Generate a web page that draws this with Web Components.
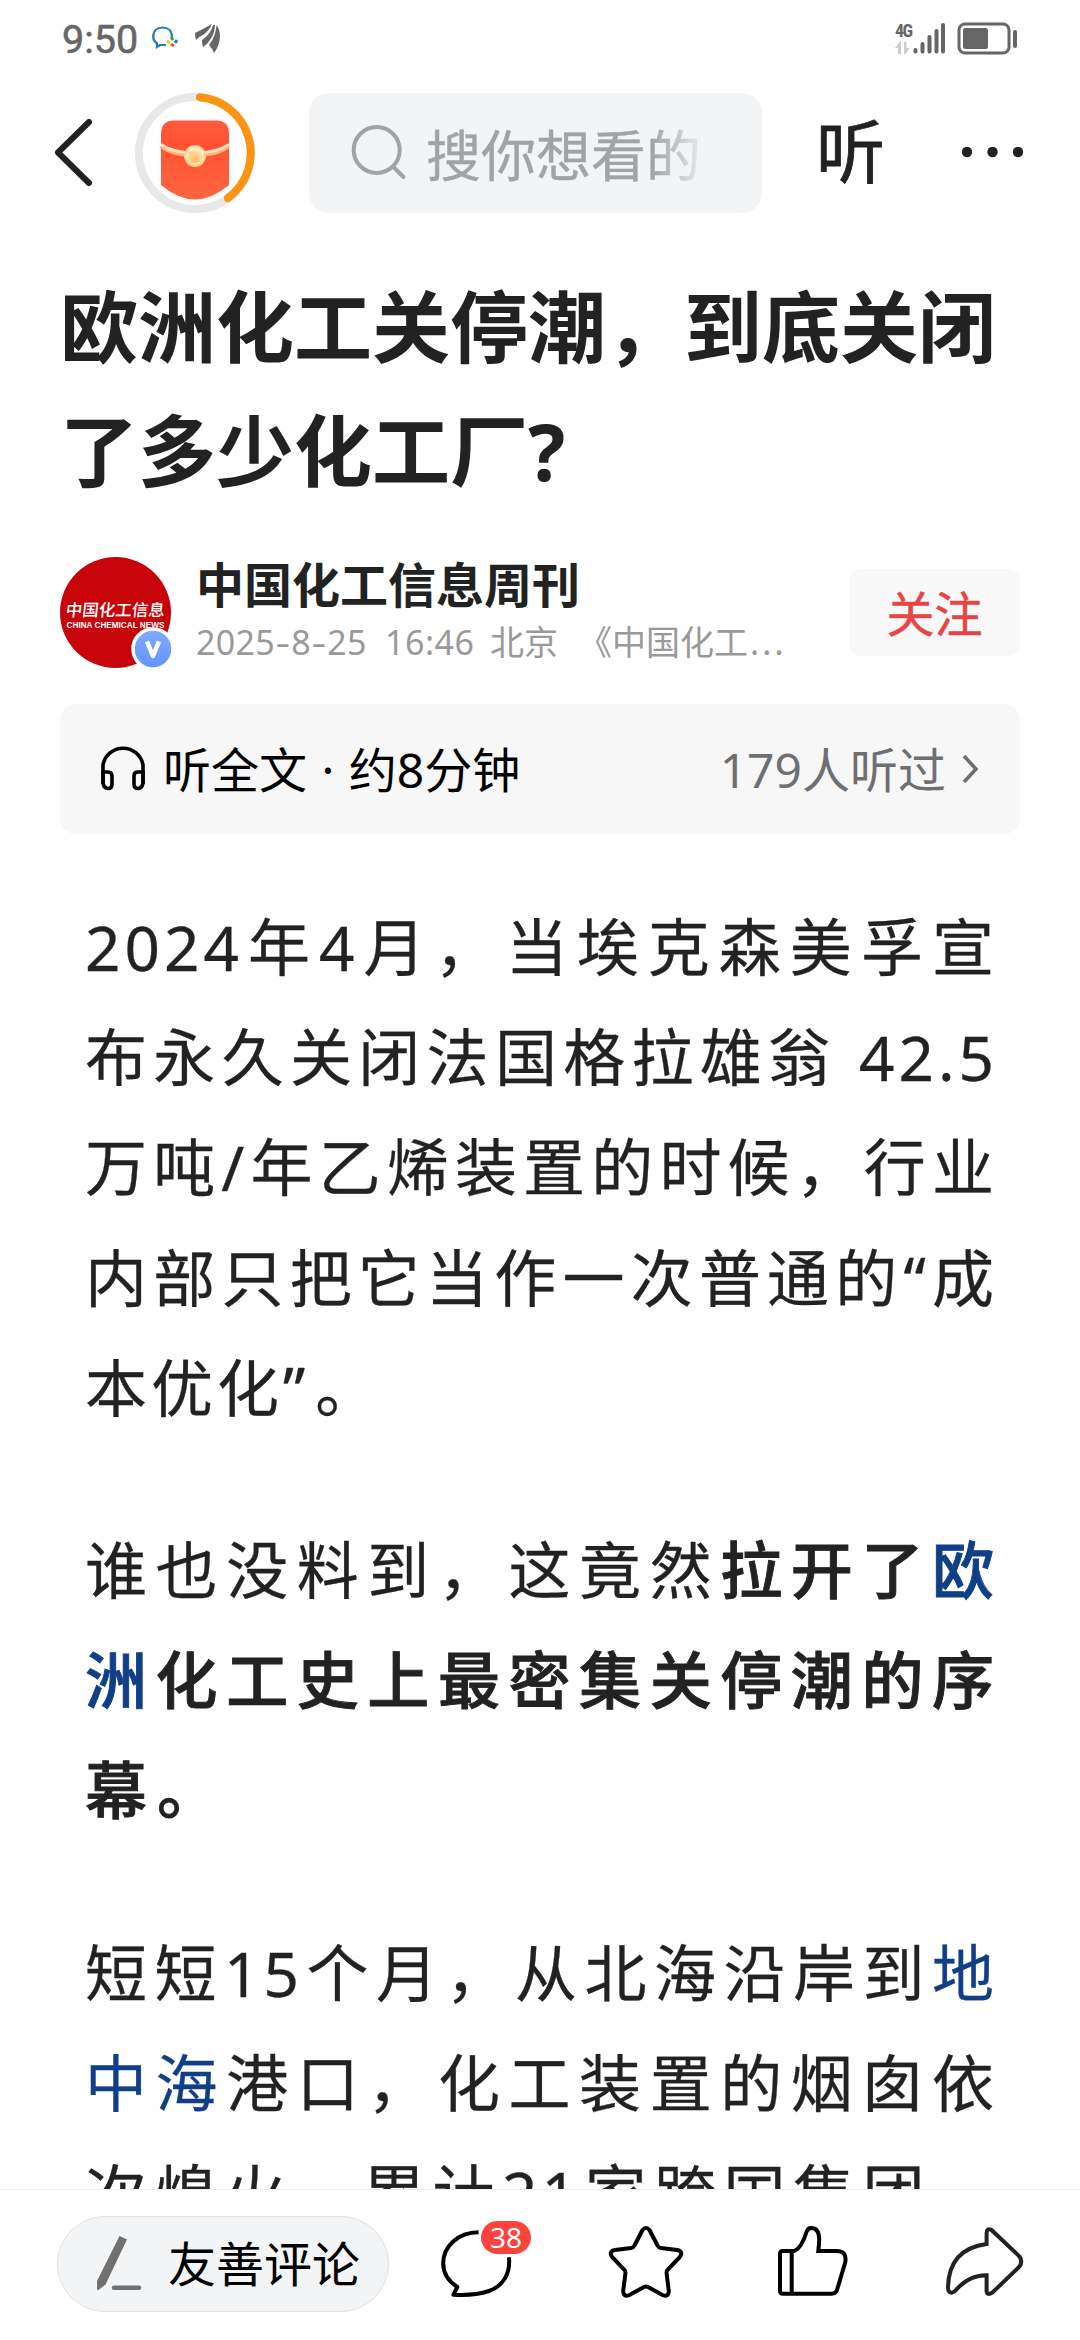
<!DOCTYPE html>
<html lang="zh-CN">
<head>
<meta charset="utf-8">
<title>欧洲化工关停潮，到底关闭了多少化工厂?</title>
<style>
    body
    {
        margin: 0;
        width: 1080px;
        height: 2340px;
        overflow: hidden;
        background: #fff;
        color: #222;
        font-family: "Noto Sans", "Noto Sans CJK SC", sans-serif;
    }
</style>
</head>
<body>
<news-page>
    <status-bar slot="top" time="9:50"></status-bar>
    <nav-bar slot="top" placeholder="搜你想看的"></nav-bar>
    <article-title>
        <div>欧洲化工关停潮，到底关闭</div>
        <div>了多少化工厂?</div>
    </article-title>
    <author-row>
        <span slot="name">中国化工信息周刊</span>
        <span slot="action">关注</span>
    </author-row>
    <listen-bar>
        <span slot="label">听全文 · 约8分钟</span>
        <span slot="count">179人听过</span>
    </listen-bar>
    <article-body>
        <text-line>2024年4月，当埃克森美孚宣</text-line>
        <text-line>布永久关闭法国格拉雄翁 42.5</text-line>
        <text-line>万吨/年乙烯装置的时候，行业</text-line>
        <text-line>内部只把它当作一次普通的“成</text-line>
        <text-line last>本优化<i>”</i>。</text-line>
    </article-body>
    <article-body>
        <text-line>谁也没料到，这竟然<b>拉开了<a>欧</a></b></text-line>
        <text-line><b><a>洲</a>化工史上最密集关停潮的序</b></text-line>
        <text-line last><b><i>幕</i>。</b></text-line>
    </article-body>
    <article-body>
        <text-line>短短15个月，从北海沿岸到<a>地</a></text-line>
        <text-line><a>中海</a>港口，化工装置的烟囱依</text-line>
        <text-line>次熄火，累计21家跨国集团，</text-line>
    </article-body>
    <bottom-bar slot="bottom" count="38">友善评论</bottom-bar>
</news-page>

<script>
// attach an open shadow root and fill it with the given markup
class BaseElement extends HTMLElement
{
    constructor()
    {
        super()
        const template = document.createElement("template")
        template.innerHTML = this.constructor.markup
        this.attachShadow({mode:"open"}).append(template.content.cloneNode(true))
    }
}

class NewsPage extends BaseElement
{
    static markup = `
        <style>
            :host
            {
                display: flex;
                flex-direction: column;
                height: 2340px;
            }

            main
            {
                flex: 1 1 0;
                min-height: 0;
                overflow: hidden;
                padding: 0 60px;
            }
        </style>
        <slot name="top"></slot>
        <main><slot></slot></main>
        <slot name="bottom"></slot>
    `
}

class StatusBar extends BaseElement
{
    static markup = `
        <style>
            :host
            {
                display: flex;
                justify-content: space-between;
                box-sizing: border-box;
                height: 93px;
                padding: 18px 62px 35px 62px;
                color: #666;
            }

            .group
            {
                display: flex;
                align-items: center;
            }

            .time
            {
                font: 400 39.5px/40px Roboto, sans-serif;
                -webkit-text-stroke: .6px #666;
                width: 90px;
                padding-top: 4px;
                color: #666;
            }

            svg
            {
                display: block;
            }

            .wing
            {
                margin-left: 16px;
            }

            .net
            {
                display: flex;
                flex-direction: column;
                justify-content: space-between;
                width: 18px;
                height: 31px;
                font: 700 18px/15px "Roboto Condensed", Roboto, sans-serif;
                letter-spacing: -1.5px;
            }

            .bars
            {
                margin-right: 12px;
            }
        </style>
        <div class="group">
            <span class="time"></span>
            <svg width="27" height="24" viewBox="0 0 27 24" fill="none">
                <path d="M20 11C20 5 16 1.500 10.500 1.500S1.200 5 1.200 11C1.200 14 3 16 5 17.500V21L8 19H14" stroke="#2079bd" stroke-width="2.200"/>
                <path d="M19 11l2 3" stroke="#4a9b3a" stroke-width="3"/>
                <path d="M25 14l-2 3" stroke="#1b7fd0" stroke-width="3"/>
                <path d="M22 20l-3-2" stroke="#d8622b" stroke-width="3"/>
                <path d="M15 15l3 2" stroke="#efc63c" stroke-width="3"/>
            </svg>
            <svg class="wing" width="25" height="29" viewBox="0 0 25 29" fill="#666">
                <path d="M0 9Q8 5 17 0Q14 7 8 11Q3 13 1 16Q0 13 0 9Z"/>
                <path d="M7 16Q16 10 18 1L20 1Q20 9 15 16Q12 21 8 23Q7 20 7 16Z"/>
                <path d="M14 21Q21 12 21.500 1Q25 6 25 12Q25 21 19 29Q17 24 14 21Z"/>
            </svg>
        </div>
        <div class="group">
            <div class="net">
                <span>4G</span>
                <svg width="15" height="12" viewBox="0 0 15 12" fill="#ccc">
                    <path d="M0 6L4.500 0H6V12H3V6ZM9 0H11.500V6H15L10.500 12H9Z"/>
                </svg>
            </div>
            <svg class="bars" width="32" height="31" viewBox="0 0 32 31" stroke="#666" stroke-width="4" stroke-linecap="round">
                <path d="M2.500 27V28.500M9.500 21V28.500M16.500 14V28.500M23.500 8V28.500M30 2V28.500"/>
            </svg>
            <svg width="61" height="33" viewBox="0 0 61 33">
                <rect x="2" y="2" width="50" height="29" rx="6" fill="none" stroke="#666" stroke-width="3"/>
                <rect x="6" y="6" width="25" height="21" rx="2.500" fill="#666"/>
                <rect x="56" y="8" width="4" height="18" rx="2" fill="#666"/>
            </svg>
        </div>
    `

    connectedCallback()
    {
        this.shadowRoot.querySelector('.time').textContent = this.getAttribute('time')
    }
}

class NavBar extends BaseElement
{
    static markup = `
        <style>
            :host
            {
                display: flex;
                align-items: center;
                height: 120px;
                padding-left: 52px;
            }

            svg
            {
                display: block;
                flex: none;
            }

            .reward
            {
                margin-left: 39px;
            }

            .search
            {
                display: flex;
                align-items: center;
                box-sizing: border-box;
                width: 453px;
                height: 120px;
                margin-left: 54px;
                padding-left: 41px;
                border-radius: 20px;
                background: #f3f4f6;
            }

            .placeholder
            {
                width: 276px;
                margin: 4px 0 0 18px;
                font-size: 55px;
                line-height: 76px;
                white-space: nowrap;
                color: #a1a3a7;
                -webkit-text-stroke: .4px #a1a3a7;
                -webkit-mask-image: linear-gradient(to right, #000 82%, transparent 103%);
                mask-image: linear-gradient(to right, #000 82%, transparent 103%);
            }

            .listen
            {
                width: 70px;
                margin: -5px 0 0 54px;
                font-size: 69px;
                line-height: 80px;
                -webkit-text-stroke: .8px #222;
            }

            .more
            {
                margin-left: 73px;
            }
        </style>
        <svg width="44" height="74" viewBox="0 0 44 74" fill="none" stroke="#222" stroke-width="6" stroke-linecap="round" stroke-linejoin="round">
            <path d="M37 6L6 36.500L37 67"/>
        </svg>
        <svg class="reward" width="120" height="120" viewBox="0 0 120 120">
            <defs>
                <linearGradient id="red" x1="0" y1="0" x2="0" y2="1">
                    <stop offset="0" stop-color="#ff5b3d"/>
                    <stop offset=".3" stop-color="#ff5233"/>
                    <stop offset="1" stop-color="#ff6541"/>
                </linearGradient>
                <radialGradient id="gold" cx=".5" cy=".75" r=".6">
                    <stop offset="0" stop-color="#ffb85c"/>
                    <stop offset="1" stop-color="#ffe6bd"/>
                </radialGradient>
            </defs>
            <circle cx="60" cy="60" r="56" fill="none" stroke="#e8e8e8" stroke-width="8"/>
            <path d="M65 4.200A56 56 0 0 1 93 105" fill="none" stroke="#fb9412" stroke-width="8" stroke-linecap="round"/>
            <path d="M38 27.500H82Q94 28 94 41V92Q60 121 26 92V41Q26 28 38 27.500Z" fill="url(#red)"/>
            <path d="M26 53Q38 62 60 62T94 53" fill="none" stroke="#ffb27a" stroke-width="4.500"/>
            <path d="M26 51.500Q38 60 60 60T94 51.500" fill="none" stroke="#ffe0bd" stroke-width="3"/>
            <circle cx="60" cy="63" r="11" fill="#ffcf8d"/>
            <circle cx="60" cy="62.500" r="8.500" fill="url(#gold)" stroke="#fff0d5"/>
        </svg>
        <div class="search">
            <svg width="58" height="60" viewBox="0 0 58 60" fill="none" stroke="#a1a3a7" stroke-width="4" stroke-linecap="round">
                <circle cx="26.700" cy="27" r="23"/>
                <path d="M43.500 44L53.500 54"/>
            </svg>
            <span class="placeholder"></span>
        </div>
        <span class="listen">听</span>
        <svg class="more" width="66" height="12" viewBox="0 0 66 12" fill="#222">
            <circle cx="8" cy="5" r="5.200"/>
            <circle cx="33.500" cy="5" r="5.200"/>
            <circle cx="59" cy="5" r="5.200"/>
        </svg>
    `

    connectedCallback()
    {
        this.shadowRoot.querySelector('.placeholder').textContent = this.getAttribute('placeholder')
    }
}

class ArticleTitle extends BaseElement
{
    static markup = `
        <style>
            :host
            {
                display: block;
                margin-top: 52px;
                font-size: 78px;
                font-weight: 700;
                line-height: 124px;
                white-space: nowrap;
            }
        </style>
        <slot></slot>
    `
}

class AuthorRow extends BaseElement
{
    static markup = `
        <style>
            :host
            {
                display: flex;
                align-items: center;
                height: 111px;
                margin-top: 44px;
            }

            .avatar
            {
                position: relative;
                display: flex;
                flex-direction: column;
                align-items: center;
                flex: none;
                box-sizing: border-box;
                width: 111px;
                height: 111px;
                padding-top: 41px;
                border-radius: 50%;
                background: #c70409;
                color: #fff;
                white-space: nowrap;
            }

            .brand
            {
                font: 500 16.5px/22px "Noto Sans CJK SC", sans-serif;
                transform: skewX(-6deg);
            }

            .sub
            {
                font: 900 8.200px/9px "Liberation Sans", sans-serif;
                margin-top: 1px;
            }

            .badge
            {
                position: absolute;
                right: -4px;
                bottom: -3px;
            }

            .text
            {
                flex: 1;
                margin: -2px 0 0 25px;
                white-space: nowrap;
            }

            .name
            {
                font-size: 48px;
                font-weight: 700;
                line-height: 56px;
            }

            .meta
            {
                display: flex;
                margin-top: 4px;
                font-size: 34px;
                line-height: 50px;
                color: #999;
            }

            .date
            {
                width: 189px;
                letter-spacing: .3px;
            }

            .date i
            {
                display: inline-block;
                font-style: normal;
                padding: 0 2.500px;
                transform: scaleX(1.35);
            }

            .time
            {
                width: 105px;
                letter-spacing: .5px;
            }

            .place
            {
                width: 88px;
            }

            .dots
            {
                letter-spacing: 3.200px;
                margin-left: 2px;
            }

            button
            {
                width: 171px;
                height: 87px;
                padding: 0 0 4px;
                border: none;
                border-radius: 12px;
                background: #f8f8f8;
                color: #e54545;
                font: inherit;
                font-size: 48px;
                -webkit-text-stroke: .5px #e54545;
            }
        </style>
        <div class="avatar">
            <span class="brand">中国化工信息</span>
            <span class="sub">CHINA CHEMICAL NEWS</span>
            <svg class="badge" width="44" height="44" viewBox="0 0 44 44">
                <defs>
                    <linearGradient id="blue" x1="0" y1="0" x2="0" y2="1">
                        <stop offset="0" stop-color="#84abff"/>
                        <stop offset="1" stop-color="#5f94fd"/>
                    </linearGradient>
                </defs>
                <circle cx="22" cy="22" r="20" fill="url(#blue)" stroke="#fff" stroke-width="3.500"/>
                <path d="M16 14.500L22 29L28 14.500" fill="none" stroke="#fff" stroke-width="4.500" stroke-linejoin="round"/>
            </svg>
        </div>
        <div class="text">
            <div class="name"><slot name="name"></slot></div>
            <div class="meta">
                <span class="date">2025<i>-</i>8<i>-</i>25</span>
                <span class="time">16:46</span>
                <span class="place">北京</span>
                <span>《中国化工<span class="dots">...</span></span>
            </div>
        </div>
        <button><slot name="action"></slot></button>
    `
}

class ListenBar extends BaseElement
{
    static markup = `
        <style>
            :host
            {
                display: flex;
                align-items: center;
                box-sizing: border-box;
                height: 130px;
                margin: 36px 0 58px;
                padding: 0 41px 0 40px;
                border-radius: 16px;
                background: #f7f7f7;
                font-size: 48px;
                line-height: 70px;
                color: #000;
            }

            .phones
            {
                margin-bottom: 5px;
            }

            .label
            {
                flex: 1;
                margin: 2px 0 0 17px;
                word-spacing: 2px;
            }

            .count
            {
                margin: 2px 15px 0 0;
                color: #6e6f73;
            }
        </style>
        <svg class="phones" width="46" height="48" viewBox="0 0 46 48" fill="none" stroke="#000" stroke-width="3.600">
            <path d="M3 41V22A20.300 20.300 0 0 1 43 22V41"/>
            <path d="M3 29H8Q12 29 12 33V41Q12 45.500 8 45.500Q3 45 3 39Z"/>
            <path d="M43 29H38Q34 29 34 33V41Q34 45.500 38 45.500Q43 45 43 39Z"/>
        </svg>
        <span class="label"><slot name="label"></slot></span>
        <span class="count"><slot name="count"></slot></span>
        <svg width="18" height="32" viewBox="0 0 18 32" fill="none" stroke="#6e6f73" stroke-width="3.600">
            <path d="M3 3L15 16L3 29"/>
        </svg>
    `
}

class ArticleBody extends BaseElement
{
    static markup = `
        <style>
            :host
            {
                display: block;
                width: 913px;
                margin: 0 0 72px 25px;
                font-size: 62px;
                line-height: 110.200px;
                letter-spacing: 4px;
                -webkit-text-stroke: .3px;
            }
        </style>
        <slot></slot>
    `
}

// one line of the paragraph, stretched to the full measure unless it is the last
class TextLine extends BaseElement
{
    static markup = `
        <style>
            :host
            {
                display: block;
                white-space: nowrap;
                text-align: justify;
                text-align-last: justify;
            }

            :host([last])
            {
                text-align-last: left;
            }
        </style>
        <slot></slot>
    `
}

class BottomBar extends BaseElement
{
    static markup = `
        <style>
            :host
            {
                display: flex;
                align-items: flex-start;
                flex: none;
                box-sizing: border-box;
                height: 151px;
                padding: 26px 55px 0 57px;
                border-top: 1px solid #eee;
                background: #fff;
            }

            .input
            {
                display: flex;
                align-items: center;
                box-sizing: border-box;
                width: 332px;
                height: 96px;
                padding-left: 37px;
                border: 1px solid #dfe0e4;
                border-radius: 48px;
                background: #f3f4f6;
                color: #000;
                font-size: 48px;
                line-height: 70px;
            }

            .input svg
            {
                margin-right: 25px;
            }

            .actions
            {
                display: flex;
                justify-content: space-between;
                flex: 1;
                margin: 6px 0 0 49px;
            }

            svg
            {
                display: block;
            }

            .comment
            {
                position: relative;
            }

            .count
            {
                position: absolute;
                left: 43px;
                top: -1px;
                width: 50px;
                height: 33px;
                border-radius: 17px;
                background: #fc433d;
                color: #fff;
                font-size: 28px;
                line-height: 33px;
                text-align: center;
            }
        </style>
        <div class="input">
            <svg width="48" height="58" viewBox="0 0 48 58" fill="#707070">
                <path d="M24.500 1L32 4.500L10.500 49.500L3.500 55Q2 55.500 2 54V46Z"/>
                <path d="M19 52.700H44" stroke="#707070" stroke-width="4.500" stroke-linecap="round"/>
            </svg>
            <slot></slot>
        </div>
        <div class="actions">
            <div class="comment">
                <svg width="80" height="80" viewBox="0 0 80 80" fill="none" stroke="#000" stroke-width="4">
                    <path d="M40.600 10.300C20 10.500 5.200 24 5.200 41.300C5.200 51 10 59 19.300 65L15.500 72.700Q36 74 51 69C65 64 72.500 52 71 35.300" stroke-linejoin="round"/>
                </svg>
                <span class="count"></span>
            </div>
            <svg width="80" height="80" viewBox="0 0 80 80" fill="none" stroke="#000" stroke-width="4">
                <path d="M36.500 8Q40 4 43.500 8L51.500 23.500Q52.500 25.600 55 26L71 28Q78 29.500 73.500 35.500L61.500 48Q60.300 49.300 60.600 51.500L62.800 69Q62.500 75.500 56.500 73L42 65Q40 64 38 65L23.500 73Q17.500 75.500 17.200 69L19.400 51.500Q19.700 49.300 18.500 48L6.500 35.500Q2 29.500 9 28L25 26Q27.500 25.600 28.500 23.500Z"/>
            </svg>
            <svg width="80" height="80" viewBox="0 0 80 80" fill="none" stroke="#000" stroke-width="4">
                <path d="M16.700 29H8Q5 29 5 32V68.700Q5 71.700 8 71.700H56.500Q61 71.700 62.300 67L70.300 40Q72 29 62 29H43.300Q44 24 44.200 17Q44 6 36 6Q32.800 6 31.500 10Q26.500 26 19.500 29H16.700V71.700"/>
            </svg>
            <svg width="82" height="80" viewBox="0 0 82 80" fill="none" stroke="#222" stroke-width="4">
                <path d="M43.600 22V11Q43.800 5.500 48.500 8L76.500 34.500Q80 39.500 76.500 44.500L49.500 70.500Q44 74 43.600 69V53.200Q26 53 13 68Q9 72.500 6 69.500Q5 68.500 5 65Q6 27 43.600 22Z"/>
            </svg>
        </div>
    `

    connectedCallback()
    {
        this.shadowRoot.querySelector('.count').textContent = this.getAttribute('count')
    }
}

// inline runs nest inside each other, out of reach of ::slotted, so they are styled from the page
const inlineStyle = document.createElement("style")
inlineStyle.textContent = `
    text-line a { color: #113f87; }
    text-line b { font-weight: 500; -webkit-text-stroke: .9px; }
    text-line i { font-style: normal; letter-spacing: 10px; }
`
document.head.append(inlineStyle)

customElements.define("news-page", NewsPage)
customElements.define("status-bar", StatusBar)
customElements.define("nav-bar", NavBar)
customElements.define("article-title", ArticleTitle)
customElements.define("author-row", AuthorRow)
customElements.define("listen-bar", ListenBar)
customElements.define("article-body", ArticleBody)
customElements.define("text-line", TextLine)
customElements.define("bottom-bar", BottomBar)
</script>
</body>
</html>
